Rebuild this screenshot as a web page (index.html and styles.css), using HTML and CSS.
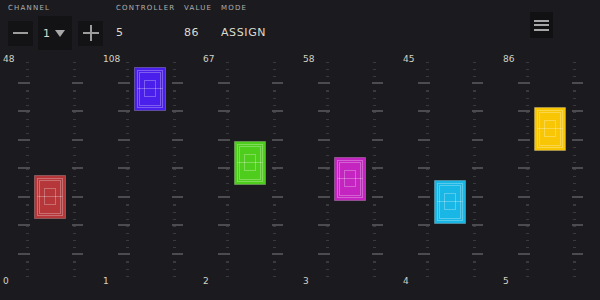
FILE: index.html
```html
<!DOCTYPE html>
<html>
<head>
<meta charset="utf-8">
<link rel="stylesheet" href="styles.css">
</head>
<body>
<div class="app">
  <header class="topbar">
    <div class="group g-channel">
      <div class="label">CHANNEL</div>
      <div class="channel-controls">
        <button class="btn"><span class="minus-line"></span></button>
        <div class="select"><span class="select-val">1</span><span class="caret"></span></div>
        <button class="btn plus"><span class="plus-h"></span><span class="plus-v"></span></button>
      </div>
    </div>
    <div class="group g-controller">
      <div class="label">CONTROLLER</div>
      <div class="value">5</div>
    </div>
    <div class="group g-value">
      <div class="label">VALUE</div>
      <div class="value">86</div>
    </div>
    <div class="group g-mode">
      <div class="label">MODE</div>
      <div class="value">ASSIGN</div>
    </div>
    <button class="menu"><span></span><span></span><span></span></button>
  </header>

  <main class="mixer">
    <div class="channel c-red">
      <div class="ch-top">48</div>
      <div class="ticks ticks-l"></div>
      <div class="track">
        <div class="fader" style="top:123px">
          <svg viewBox="0 0 32 44" width="32" height="44"><rect class="f-body" x="0.5" y="0.5" width="31" height="43"/><rect class="f-line" x="3.5" y="3.5" width="25" height="37"/><rect class="f-line" x="5.5" y="5.5" width="21" height="33"/><rect class="f-line" x="10.5" y="13.5" width="11" height="16"/><line class="f-line" x1="3.5" y1="21.5" x2="28.5" y2="21.5"/></svg>
        </div>
      </div>
      <div class="ticks ticks-r"></div>
      <div class="ch-bottom">0</div>
    </div>
    <div class="channel c-purple">
      <div class="ch-top">108</div>
      <div class="ticks ticks-l"></div>
      <div class="track">
        <div class="fader" style="top:15px">
          <svg viewBox="0 0 32 44" width="32" height="44"><rect class="f-body" x="0.5" y="0.5" width="31" height="43"/><rect class="f-line" x="3.5" y="3.5" width="25" height="37"/><rect class="f-line" x="5.5" y="5.5" width="21" height="33"/><rect class="f-line" x="10.5" y="13.5" width="11" height="16"/><line class="f-line" x1="3.5" y1="21.5" x2="28.5" y2="21.5"/></svg>
        </div>
      </div>
      <div class="ticks ticks-r"></div>
      <div class="ch-bottom">1</div>
    </div>
    <div class="channel c-green">
      <div class="ch-top">67</div>
      <div class="ticks ticks-l"></div>
      <div class="track">
        <div class="fader" style="top:88.8px">
          <svg viewBox="0 0 32 44" width="32" height="44"><rect class="f-body" x="0.5" y="0.5" width="31" height="43"/><rect class="f-line" x="3.5" y="3.5" width="25" height="37"/><rect class="f-line" x="5.5" y="5.5" width="21" height="33"/><rect class="f-line" x="10.5" y="13.5" width="11" height="16"/><line class="f-line" x1="3.5" y1="21.5" x2="28.5" y2="21.5"/></svg>
        </div>
      </div>
      <div class="ticks ticks-r"></div>
      <div class="ch-bottom">2</div>
    </div>
    <div class="channel c-magenta">
      <div class="ch-top">58</div>
      <div class="ticks ticks-l"></div>
      <div class="track">
        <div class="fader" style="top:105px">
          <svg viewBox="0 0 32 44" width="32" height="44"><rect class="f-body" x="0.5" y="0.5" width="31" height="43"/><rect class="f-line" x="3.5" y="3.5" width="25" height="37"/><rect class="f-line" x="5.5" y="5.5" width="21" height="33"/><rect class="f-line" x="10.5" y="13.5" width="11" height="16"/><line class="f-line" x1="3.5" y1="21.5" x2="28.5" y2="21.5"/></svg>
        </div>
      </div>
      <div class="ticks ticks-r"></div>
      <div class="ch-bottom">3</div>
    </div>
    <div class="channel c-cyan">
      <div class="ch-top">45</div>
      <div class="ticks ticks-l"></div>
      <div class="track">
        <div class="fader" style="top:128.4px">
          <svg viewBox="0 0 32 44" width="32" height="44"><rect class="f-body" x="0.5" y="0.5" width="31" height="43"/><rect class="f-line" x="3.5" y="3.5" width="25" height="37"/><rect class="f-line" x="5.5" y="5.5" width="21" height="33"/><rect class="f-line" x="10.5" y="13.5" width="11" height="16"/><line class="f-line" x1="3.5" y1="21.5" x2="28.5" y2="21.5"/></svg>
        </div>
      </div>
      <div class="ticks ticks-r"></div>
      <div class="ch-bottom">4</div>
    </div>
    <div class="channel c-yellow">
      <div class="ch-top">86</div>
      <div class="ticks ticks-l"></div>
      <div class="track">
        <div class="fader" style="top:54.6px">
          <svg viewBox="0 0 32 44" width="32" height="44"><rect class="f-body" x="0.5" y="0.5" width="31" height="43"/><rect class="f-line" x="3.5" y="3.5" width="25" height="37"/><rect class="f-line" x="5.5" y="5.5" width="21" height="33"/><rect class="f-line" x="10.5" y="13.5" width="11" height="16"/><line class="f-line" x1="3.5" y1="21.5" x2="28.5" y2="21.5"/></svg>
        </div>
      </div>
      <div class="ticks ticks-r"></div>
      <div class="ch-bottom">5</div>
    </div>
  </main>
</div>
</body>
</html>
```
FILE: styles.css
```css
* { box-sizing: border-box; }
html, body {
  margin: 0;
  padding: 0;
  background: #1b1b1f;
  font-family: "DejaVu Sans", "Liberation Sans", sans-serif;
}
.app {
  width: 600px;
  height: 300px;
  overflow: hidden;
  background: #1b1b1f;
}

/* ---------- top bar ---------- */
.topbar {
  height: 52px;
  display: flex;
  align-items: flex-start;
  padding: 3px 0 0 8px;
}
.group { display: flex; flex-direction: column; }
.g-channel { width: 108px; }
.g-controller { width: 68px; }
.g-value { width: 37px; }
.g-mode { width: 60px; }
.label {
  font-size: 7px;
  line-height: 10px;
  letter-spacing: 1.2px;
  color: #b0b0b0;
  white-space: nowrap;
}
.value {
  margin-top: 3px;
  height: 34px;
  line-height: 34px;
  font-size: 11px;
  letter-spacing: 0.6px;
  color: #dcdacd;
  white-space: nowrap;
}
.channel-controls {
  margin-top: 3px;
  height: 34px;
  display: flex;
  align-items: center;
  gap: 5px;
}
.btn {
  width: 25px;
  height: 25px;
  border: none;
  padding: 0;
  margin: 0;
  background: #131316;
  display: flex;
  align-items: center;
  justify-content: center;
  position: relative;
}
.btn.plus { margin-left: 1px; }
.minus-line {
  width: 15px;
  height: 2px;
  background: #9c9c9c;
}
.plus-h, .plus-v {
  position: absolute;
  background: #9c9c9c;
}
.plus-h { width: 16px; height: 2px; }
.plus-v { width: 2px; height: 16px; }
.select {
  width: 34px;
  height: 34px;
  background: #131316;
  display: flex;
  align-items: center;
  padding-left: 5px;
}
.select-val {
  font-size: 11px;
  color: #dcdacd;
  width: 7px;
}
.caret {
  margin-left: 5px;
  width: 0;
  height: 0;
  border-left: 5px solid transparent;
  border-right: 5px solid transparent;
  border-top: 7px solid #a8a8a8;
}
.menu {
  margin: 9px 47px 0 auto;
  width: 23px;
  height: 26px;
  border: none;
  padding: 0;
  background: #111113;
  display: flex;
  flex-direction: column;
  align-items: center;
  justify-content: center;
  gap: 2.5px;
}
.menu span {
  width: 15px;
  height: 2px;
  background: #a6a6a6;
}

/* ---------- mixer ---------- */
.mixer {
  display: flex;
  height: 248px;
}
.channel {
  width: 100px;
  height: 248px;
  display: grid;
  grid-template-columns: 18px 12px 42px 11px 1fr;
  grid-template-rows: 13px 1fr 24px;
}
.ch-top, .ch-bottom {
  grid-column: 1;
  padding-left: 3px;
  font-size: 9px;
  line-height: 9px;
  color: #d4d2c4;
  white-space: nowrap;
}
.ch-top { grid-row: 1; padding-top: 3px; }
.ch-bottom { grid-row: 3; padding-top: 1px; }

.ticks {
  grid-row: 1 / 4;
  align-self: start;
  margin-top: 9px;
  height: 216px;
  background-repeat: no-repeat;
}
.ticks-l {
  grid-column: 2;
  background-image:
    repeating-linear-gradient(to bottom, transparent 0 21px, #4c4c50 21px 23px, transparent 23px 28.5px),
    repeating-linear-gradient(to bottom, #3a3a3e 0 1px, transparent 1px 7.125px);
  background-size: 12px 100%, 3px 100%;
  background-position: 0 0, 8px 0.6px;
}
.ticks-r {
  grid-column: 4;
  background-image:
    repeating-linear-gradient(to bottom, transparent 0 21px, #4c4c50 21px 23px, transparent 23px 28.5px),
    repeating-linear-gradient(to bottom, #3a3a3e 0 1px, transparent 1px 7.125px);
  background-size: 11px 100%, 3px 100%;
  background-position: 0 0, 1px 0.6px;
}
.track {
  grid-column: 3;
  grid-row: 1 / 4;
  position: relative;
}
.fader {
  position: absolute;
  left: 4px;
  width: 32px;
  height: 44px;
}
.fader svg { display: block; }
.f-body {
  fill: var(--fc);
  stroke: rgba(255, 255, 255, 0.22);
  stroke-width: 1;
}
.f-line {
  fill: none;
  stroke: rgba(255, 255, 255, 0.28);
  stroke-width: 1;
}
.c-red { --fc: #b5373a; }
.c-purple { --fc: #4b1feb; }
.c-green { --fc: #4fcd1c; }
.c-magenta { --fc: #c424bf; }
.c-cyan { --fc: #18b7e6; }
.c-yellow { --fc: #f9c606; }
```
